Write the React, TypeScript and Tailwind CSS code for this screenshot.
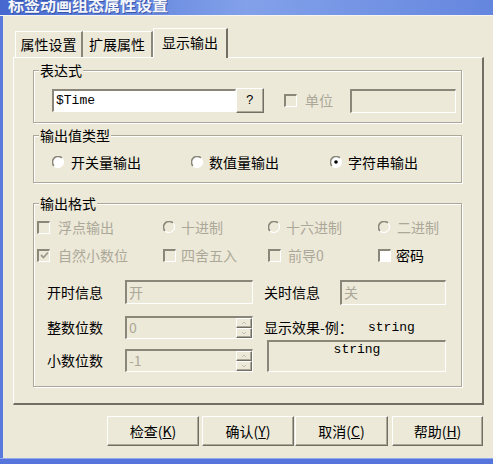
import React from "react";

const cjk = "font-['Noto_Sans_CJK_SC',sans-serif]";
const mono = "font-['Liberation_Mono','Noto_Sans_CJK_SC',monospace]";
const field =
  "border-t-2 border-l-2 border-t-[#8a877a] border-l-[#8a877a] border-b border-r border-b-white border-r-white";
const raised =
  "border border-t-white border-l-white border-b-[#716f64] border-r-[#716f64] shadow-[inset_-1px_-1px_0_#aca899]";
const gray = "text-[#aca899]";

function Radio({ checked = false, disabled = false }: { checked?: boolean; disabled?: boolean }) {
  return (
    <svg width="12" height="12" viewBox="0 0 12 12" className="shrink-0">
      <circle cx="6" cy="6" r="5.5" fill={disabled ? "#ece9d8" : "#ffffff"} />
      <path d="M10 2 A5.66 5.66 0 0 0 2 10" stroke="#8a877a" strokeWidth="1.6" fill="none" />
      <path d="M2 10 A5.66 5.66 0 0 0 10 2" stroke="#ffffff" strokeWidth="1.2" fill="none" />
      {checked && <circle cx="6" cy="6" r="1.8" fill="#000" />}
    </svg>
  );
}

function Check({ checked = false, disabled = false }: { checked?: boolean; disabled?: boolean }) {
  return (
    <div
      className={`w-[13px] h-[13px] shrink-0 flex items-center justify-center ${field} ${
        disabled ? "bg-[#ece9d8]" : "bg-white"
      }`}
    >
      {checked && (
        <svg width="9" height="9" viewBox="0 0 9 9">
          <path d="M1 4 L3.5 6.5 L8 1.5" stroke={disabled ? "#9c9a8c" : "#000"} strokeWidth="1.8" fill="none" />
        </svg>
      )}
    </div>
  );
}

function Group({ label, className, children }: { label: string; className: string; children: React.ReactNode }) {
  return (
    <div className={`relative border border-[#aca899] shadow-[inset_1px_1px_0_#fff,1px_1px_0_#fff] ${className}`}>
      <span className="absolute -top-[9px] left-[5px] px-[1px] bg-[#ece9d8] leading-[16px]">{label}</span>
      {children}
    </div>
  );
}

function Option({ kind, label, checked, disabled, gap = "ml-[6px]" }: {
  kind: "radio" | "check";
  label: string;
  checked?: boolean;
  disabled?: boolean;
  gap?: string;
}) {
  return (
    <div className="flex items-center h-[20px]">
      {kind === "radio" ? <Radio checked={checked} disabled={disabled} /> : <Check checked={checked} disabled={disabled} />}
      <span className={`${gap} ${disabled ? gray : "text-black"}`}>{label}</span>
    </div>
  );
}

function Spinner({ value }: { value: string }) {
  return (
    <div className={`w-[128px] h-[23px] flex ${field} bg-[#ece9d8]`}>
      <span className={`flex-1 pl-[2px] leading-[19px] ${gray}`}>{value}</span>
      <div className="w-[16px] flex flex-col">
        {["M4 5 L6 3 L8 5", "M4 3 L6 5 L8 3"].map((d) => (
          <div key={d} className={`flex-1 flex items-center justify-center bg-[#ece9d8] ${raised}`}>
            <svg width="12" height="8" viewBox="0 0 12 8">
              <path d={d} fill="none" stroke="#c4c2b4" strokeWidth="1" />
            </svg>
          </div>
        ))}
      </div>
    </div>
  );
}

function Btn({ label, hot, className }: { label: string; hot: string; className: string }) {
  return (
    <button className={`h-[30px] bg-[#ece9d8] flex items-center justify-center ${raised} ${className}`}>
      {label}(<span className="underline">{hot}</span>)
    </button>
  );
}

export default function App() {
  return (
    <div className={`w-[493px] h-[464px] flex flex-col overflow-hidden bg-[#ece9d8] text-[14px] text-black ${cjk}`}>
      <div className="h-[15px] shrink-0 overflow-hidden bg-gradient-to-r from-[#4668cf] via-[#83a1ea] to-[#6586de]">
        <div className="ml-[8px] -mt-[4px] text-[16px] leading-[16px] font-bold text-[#f4f6fb] [text-shadow:1px_1px_0_#3a56a8]">
          标签动画组态属性设置
        </div>
      </div>
      <div className="h-px shrink-0 bg-[#f6f5f0]" />

      <div className="flex flex-1 min-h-0">
        <div className="w-[3px] bg-[#5a79dc]" />
        <div className="flex-1 flex flex-col pt-[12px] pl-[10px] pr-[9px]">
          {/* tabs */}
          <div className="flex items-end h-[29px] pl-[2px]">
            <div className="w-[68px] h-[26px] flex items-center justify-center border-t border-l border-white border-r-2 border-r-[#8a877a]">
              属性设置
            </div>
            <div className="w-[70px] h-[26px] flex items-center justify-center border-t border-white border-r-2 border-r-[#8a877a]">
              扩展属性
            </div>
            <div className="relative z-10 -mb-px w-[75px] h-[30px] pb-[2px] flex items-center justify-center bg-[#ece9d8] border-t border-l border-white border-r-2 border-r-[#716f64]">
              显示输出
            </div>
          </div>

          {/* panel */}
          <div className="h-[348px] border-t border-l border-white border-r-2 border-b-2 border-r-[#716f64] border-b-[#716f64] pl-[19px] pt-[12px]">
            <Group label="表达式" className="w-[429px] h-[53px]">
              <div className="flex items-center pt-[17px] pl-[18px]">
                <div className={`w-[184px] h-[23px] bg-white ${field} ${mono} text-[13px] leading-[19px] pl-[2px]`}>$Time</div>
                <div className={`w-[28px] h-[25px] flex items-center justify-center ${raised} ${mono} text-[13px]`}>?</div>
                <div className="ml-[20px]">
                  <Check disabled />
                </div>
                <span className={`ml-[8px] ${gray}`}>单位</span>
                <div className={`ml-[17px] w-[106px] h-[24px] ${field}`} />
              </div>
            </Group>

            <Group label="输出值类型" className="mt-[12px] w-[429px] h-[48px]">
              <div className="grid grid-cols-[139px_139px_auto] pt-[16px] pl-[18px]">
                <Option kind="radio" label="开关量输出" gap="ml-[7px]" />
                <Option kind="radio" label="数值量输出" />
                <Option kind="radio" label="字符串输出" checked />
              </div>
            </Group>

            <Group label="输出格式" className="mt-[20px] w-[429px] h-[184px]">
              <div className="grid grid-cols-[126px_105px_110px_auto] gap-y-[8px] pt-[13px] pl-[3px]">
                <Option kind="check" label="浮点输出" disabled gap="ml-[8px]" />
                <Option kind="radio" label="十进制" disabled />
                <Option kind="radio" label="十六进制" disabled />
                <Option kind="radio" label="二进制" disabled gap="ml-[7px]" />
                <Option kind="check" label="自然小数位" checked disabled gap="ml-[8px]" />
                <Option kind="check" label="四舍五入" disabled gap="ml-[5px]" />
                <Option kind="check" label="前导0" disabled gap="ml-[7px]" />
                <Option kind="check" label="密码" gap="ml-[5px]" />
              </div>

              <div className="flex mt-[15px] ml-[13px]">
                <div className="flex flex-col">
                  <div className="flex items-center h-[24px]">
                    <span className="w-[78px]">开时信息</span>
                    <div className={`w-[128px] h-[24px] ${field} pl-[2px] leading-[20px] ${gray}`}>开</div>
                  </div>
                  <div className="flex items-center mt-[12px]">
                    <span className="w-[78px]">整数位数</span>
                    <Spinner value="0" />
                  </div>
                  <div className="flex items-center mt-[10px]">
                    <span className="w-[78px]">小数位数</span>
                    <Spinner value="-1" />
                  </div>
                </div>

                <div className="flex flex-col ml-[11px]">
                  <div className="flex items-center h-[25px]">
                    <span className="w-[76px]">关时信息</span>
                    <div className={`w-[106px] h-[25px] ${field} pl-[2px] leading-[21px] ${gray}`}>关</div>
                  </div>
                  <div className="flex items-center h-[23px] mt-[11px]">
                    <span className="w-[104px]">显示效果-例：</span>
                    <span className={`${mono} text-[13px]`}>string</span>
                  </div>
                  <div className={`ml-[3px] mt-px w-[179px] h-[32px] ${field} text-center ${mono} text-[13px] leading-[16px]`}>
                    string
                  </div>
                </div>
              </div>
            </Group>
          </div>

          {/* buttons */}
          <div className="flex mt-[11px]">
            <Btn label="检查" hot="K" className="ml-[94px] w-[92px]" />
            <Btn label="确认" hot="Y" className="ml-[3px] w-[92px]" />
            <Btn label="取消" hot="C" className="ml-[1px] w-[93px]" />
            <Btn label="帮助" hot="H" className="ml-[4px] w-[91px]" />
          </div>
        </div>
      </div>

      <div className="h-[6px] shrink-0 bg-[#5574dc] border-t border-[#92a9ee]" />
    </div>
  );
}
